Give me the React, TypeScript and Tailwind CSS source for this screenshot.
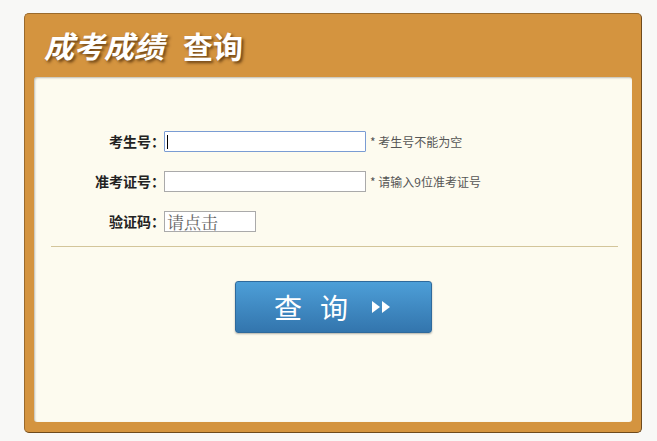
import React from "react";

export default function App() {
  const font = { fontFamily: '"Microsoft YaHei", "Noto Sans CJK SC", "Noto Sans", sans-serif' };
  return (
    <div className="w-[657px] h-[441px] bg-[#f8f8f6] pt-[13px] pl-[24px]" style={font}>
      <div className="w-[618px] h-[420px] bg-[#d4943f] rounded-[5px] border border-[#9a6a2c] border-r-[#6e4a1c] border-b-[#6e4a1c] flex flex-col">
        <div className="h-[63px] pl-[19px] pt-[13px] flex items-start">
          <span className="text-white text-[30px] leading-[36px] font-bold italic [text-shadow:2px_2px_3px_rgba(60,30,0,0.7)]">
            成考成绩
          </span>
          <span className="text-white text-[30px] leading-[36px] font-bold ml-[19px] [text-shadow:2px_2px_3px_rgba(60,30,0,0.7)]">
            查询
          </span>
        </div>
        <div className="ml-[9px] w-[598px] h-[345px] bg-[#fdfbef] rounded-[3px] shadow-[inset_1px_1px_2px_rgba(0,0,0,0.25)] flex flex-col">
          <div className="pt-[54px] flex flex-col gap-[19px]">
            <div className="flex items-center h-[21px]">
              <div className="w-[131px] text-right text-[14px] font-bold text-[#222]">考生号：</div>
              <div className="ml-[-1px] w-[202px] h-[21px] bg-white border border-[#7a9cd3] rounded-[1px] flex items-center pl-[2px]">
                <div className="w-[1px] h-[14px] bg-black" />
              </div>
              <div className="ml-[4px] text-[12px] text-[#555]">* 考生号不能为空</div>
            </div>
            <div className="flex items-center h-[21px]">
              <div className="w-[131px] text-right text-[14px] font-bold text-[#222]">准考证号：</div>
              <div className="ml-[-1px] w-[202px] h-[21px] bg-white border border-[#aaa]" />
              <div className="ml-[4px] text-[12px] text-[#555]">* 请输入9位准考证号</div>
            </div>
            <div className="flex items-center h-[21px]">
              <div className="w-[131px] text-right text-[14px] font-bold text-[#222]">验证码：</div>
              <div
                className="ml-[-1px] w-[92px] h-[21px] bg-white border border-[#aaa] text-[17px] leading-[19px] text-[#666] pl-[2px]"
                style={{ fontFamily: '"Noto Serif CJK SC", "Noto Sans CJK SC", serif' }}
              >
                请点击
              </div>
            </div>
          </div>
          <div className="mt-[14px] ml-[17px] w-[567px] h-[1px] bg-[#d3c59a]" />
          <div className="mt-[34px] flex justify-center">
            <div className="w-[197px] h-[52px] rounded-[3px] border border-[#2f6a9c] bg-gradient-to-b from-[#4d9fd8] to-[#3375ad] shadow-[0_1px_2px_rgba(0,0,0,0.3)] flex items-center justify-center">
              <span className="text-white text-[28px] tracking-[18px] leading-none">查询</span>
              <svg width="22" height="14" viewBox="0 0 22 14" className="ml-[4px]">
                <polygon points="2,1 10,7 2,13" fill="white" />
                <polygon points="12,1 20,7 12,13" fill="white" />
              </svg>
            </div>
          </div>
        </div>
      </div>
    </div>
  );
}
